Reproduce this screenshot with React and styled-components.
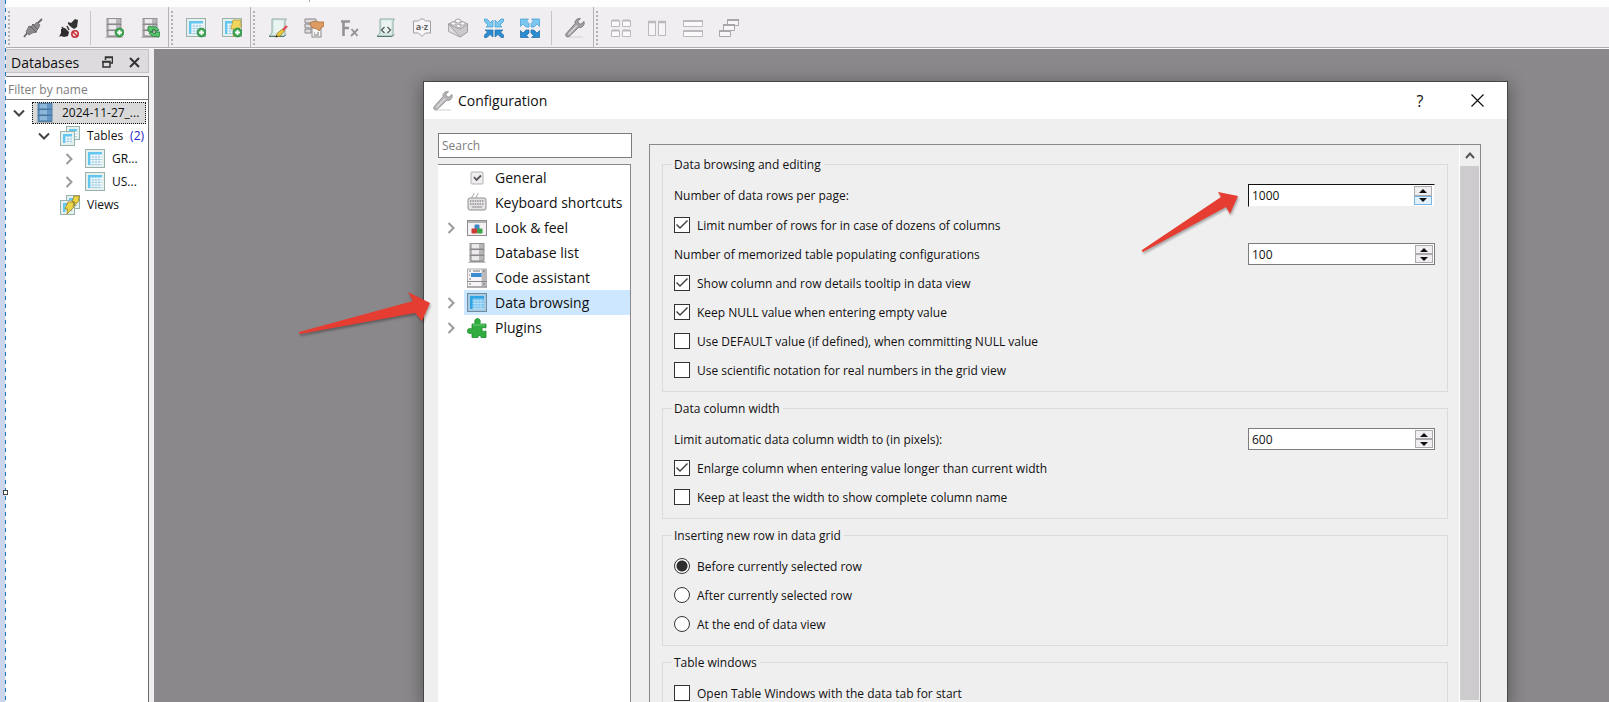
import React, { useState } from "react";
import styled, { createGlobalStyle, css } from "styled-components";

const GlobalStyle = createGlobalStyle`
  * {
    box-sizing: border-box;
  }
  body {
    margin: 0;
    background: #fdfdfd;
    color: #111;
    font-family: "Open Sans", "Noto Sans", sans-serif;
    font-size: 14px;
    overflow: hidden;
  }
  button, input {
    font: inherit;
    color: inherit;
    border-radius: 0;
  }
  button {
    padding: 0;
    border: 0;
    background: none;
    cursor: pointer;
  }
`;

const Page = styled.div`
  position: relative;
  display: flex;
  height: 100vh;
  overflow: hidden;
`;

const Edge = styled.div`
  position: relative;
  flex: none;
  width: 6px;
  background:
    repeating-linear-gradient(#1b78bc 0 4px, #e9f1fa 4px 8px) right / 1px 100% no-repeat,
    #cbd6ea;
`;

const EdgeHandle = styled.span`
  position: absolute;
  top: 490px;
  right: -2px;
  width: 5px;
  height: 5px;
  border: 1px solid #444;
  background: #fff;
`;

const Window = styled.div`
  flex: 1;
  min-width: 0;
  display: flex;
  flex-direction: column;
`;

const MenuStrip = styled.div`
  height: 7px;
  flex: none;
  background: linear-gradient(#aaa, #aaa) 303px 0 / 1px 2px no-repeat;
`;

const Toolbar = styled.div`
  display: flex;
  flex: none;
  height: 42px;
  background: #f0eef0;
  border-bottom: 1px solid #fafafa;
  box-shadow: inset 0 -1px #aeacae;
`;

const ToolGroup = styled.div`
  display: flex;
  align-items: center;
  border-right: ${(p) => (p.$last ? "0" : "1px solid #b4b2b4")};
`;

const Grip = styled.span`
  width: 9px;
  height: 34px;
  background: repeating-linear-gradient(#b4b2b4 0 2px, transparent 2px 4px) 2px 0 / 2px 100% no-repeat;
`;

const ToolButton = styled.button`
  display: grid;
  place-items: center;
  width: 36px;
  height: 36px;
`;

const Separator = styled.span`
  width: 9px;
  height: 34px;
  background: linear-gradient(#c6c4c6, #c6c4c6) 3px 0 / 1px 100% no-repeat;
`;

const Workspace = styled.div`
  flex: 1;
  min-height: 0;
  display: flex;
`;

const Sidebar = styled.aside`
  flex: none;
  width: 148px;
  display: flex;
  flex-direction: column;
  gap: 3px;
  padding-right: 5px;
  background: #f0eef0;
`;

const SidebarHeader = styled.div`
  display: flex;
  align-items: center;
  gap: 16px;
  height: 24px;
  padding: 2px 8px 0 5px;
  background: #dddbdd;
  border: 1px solid #c4c2c4;
  border-left: 0;
  h2 {
    flex: 1;
    margin: 0;
    font-size: 14px;
    font-weight: 400;
  }
  button {
    display: grid;
  }
`;

const SidebarBody = styled.div`
  flex: 1;
  background: #fff;
  border: 1px solid #6e6c6e;
  border-width: 1px 1px 0 0;
`;

const FilterInput = styled.input`
  display: block;
  width: 100%;
  height: 23px;
  padding: 2px 2px 0;
  border: 0;
  border-bottom: 1px solid #7d7b7d;
  outline: 0;
  font-size: 12px;
  &::placeholder {
    color: #7d7d7d;
  }
`;

const Tree = styled.div`
  padding-top: 1px;
  font-size: 12px;
`;

const TreeRow = styled.button`
  display: flex;
  align-items: center;
  width: 100%;
  height: 23px;
  padding: 0 2px 0 ${(p) => p.$depth * 25}px;
`;

const TreeToggle = styled.span`
  display: grid;
  place-items: center;
  flex: none;
  width: 26px;
`;

const TreeLabel = styled.span`
  flex: 1;
  min-width: 0;
  display: flex;
  align-items: center;
  gap: 7px;
  height: 22px;
  padding-left: 3px;
  white-space: nowrap;
  ${(p) =>
    p.$selected &&
    css`
      padding-left: 2px;
      background: #d9d9d9;
      border: 1px dotted #111;
    `}
`;

const Count = styled.span`
  color: #2323c8;
`;

const Mdi = styled.main`
  position: relative;
  flex: 1;
  background: #8a888a;
`;

const Dialog = styled.section`
  position: absolute;
  top: 32px;
  right: 101px;
  bottom: 0;
  left: 269px;
  display: flex;
  flex-direction: column;
  background: #f0eff0;
  border: 1px solid #474547;
  border-bottom: 0;
  box-shadow: 0 4px 16px 2px rgba(0, 0, 0, 0.32);
`;

const TitleBar = styled.header`
  display: flex;
  align-items: center;
  flex: none;
  height: 37px;
  padding: 0 10px 0 9px;
  background: #fff;
  h1 {
    flex: 1;
    margin: 0 0 0 5px;
    font-size: 14px;
    font-weight: 400;
  }
`;

const TitleButton = styled.button`
  display: grid;
  place-items: center;
  width: 40px;
  height: 30px;
  margin-left: 17px;
  font-size: 16px;
`;

const DialogBody = styled.div`
  flex: 1;
  min-height: 0;
  display: flex;
  gap: 17px;
  padding: 14px 26px 0 14px;
`;

const NavColumn = styled.div`
  flex: none;
  width: 194px;
  display: flex;
  flex-direction: column;
  gap: 6px;
`;

const SearchInput = styled.input`
  width: 100%;
  height: 25px;
  padding: 0 3px;
  border: 1px solid #7d7b7d;
  background: #fff;
  outline: 0;
  font-size: 12px;
  &::placeholder {
    color: #7d7d7d;
  }
`;

const Nav = styled.nav`
  flex: 1;
  margin-right: 1px;
  background: #fff;
  border: 1px solid #8a888a;
  border-width: 1px 1px 0 0;
`;

const NavItem = styled.button`
  display: flex;
  align-items: center;
  width: 100%;
  height: 25px;
`;

const NavToggle = styled.span`
  display: grid;
  place-items: center;
  width: 26px;
`;

const NavLabel = styled.span`
  flex: 1;
  display: flex;
  align-items: center;
  gap: 8px;
  height: 25px;
  padding-left: 3px;
  white-space: nowrap;
  background: ${(p) => (p.$active ? "#cce7ff" : "none")};
`;

const Pane = styled.div`
  flex: 1;
  min-width: 0;
  margin-top: 11px;
  display: flex;
  border: 1px solid #8a888a;
  border-bottom: 0;
`;

const PaneContent = styled.form`
  flex: 1;
  display: flex;
  flex-direction: column;
  gap: 6px;
  overflow: hidden;
  padding: 9px 11px 0 12px;
  font-size: 12px;
`;

const ScrollBar = styled.div`
  display: flex;
  flex-direction: column;
  flex: none;
  width: 21px;
  padding: 0 1px 2px 0;
  border-left: 1px solid #fff;
`;

const ScrollButton = styled.button`
  display: grid;
  place-items: center;
  height: 21px;
`;

const ScrollThumb = styled.div`
  flex: 1;
  background: #cdcbcd;
`;

const Group = styled.fieldset`
  flex: none;
  min-width: 0;
  margin: 0;
  padding: 10px 12px 10px 11px;
  border: 1px solid #dcdadc;
  legend {
    margin-left: -2px;
    padding: 2px 3px 0 2px;
    line-height: 18px;
  }
`;

const Rows = styled.div`
  display: flex;
  flex-direction: column;
  gap: 7px;
`;

const Row = styled.div`
  display: flex;
  align-items: center;
  height: ${(p) => (p.$focused ? 23 : 22)}px;
  > label:first-child {
    flex: 1;
  }
`;

const Option = styled.label`
  display: flex;
  align-items: center;
  gap: 7px;
`;

const CheckBox = styled.input.attrs({ type: "checkbox" })`
  appearance: none;
  display: grid;
  width: 16px;
  height: 16px;
  margin: 0;
  border: 1px solid #333;
  background: #fff;
  &:checked::after {
    content: "";
    background: #3c3c3c;
    clip-path: polygon(1px 7px, 2px 6px, 5px 9px, 12px 2px, 13px 3px, 5px 11px);
  }
`;

const Radio = styled.input.attrs({ type: "radio" })`
  appearance: none;
  width: 16px;
  height: 16px;
  margin: 0;
  border: 1px solid #333;
  border-radius: 50%;
  background: ${(p) => (p.checked ? "radial-gradient(#2e2e2e 5px, #fff 6px)" : "#fff")};
`;

const SpinFrame = styled.div`
  display: flex;
  width: 187px;
  height: 22px;
  background: #fff;
  border: 1px solid #7d7b7d;
  ${(p) =>
    p.$focused &&
    css`
      height: 23px;
      padding-right: 1px;
      border-color: #111 #f0eff0 #f0eff0 #111;
    `}
  input {
    flex: 1;
    min-width: 0;
    padding: 0 3px;
    border: 0;
    outline: 0;
    background: none;
  }
`;

const SpinButtons = styled.div`
  display: flex;
  flex-direction: column;
  width: 18px;
  margin: 1px;
`;

const SpinButton = styled.button`
  flex: 1;
  display: grid;
  place-items: center;
  background: ${(p) => (p.$hot ? "#e3f1fc" : "#f0eef0")};
  border: 1px solid ${(p) => (p.$hot ? "#7ab4e2" : "#acaaac")};
`;

const Callout = styled.svg`
  position: absolute;
  left: ${(p) => p.$x}px;
  top: ${(p) => p.$y}px;
  pointer-events: none;
  fill: #e53d31;
  filter: drop-shadow(1px 2px 1px rgba(0, 0, 0, 0.3));
`;

/* ---------- icons ---------- */

const Icon = ({ children, size = 20 }) => (
  <svg width={size} height={size} viewBox="0 0 20 20" aria-hidden="true">
    {children}
  </svg>
);

const PlusBadge = () => (
  <g>
    <circle cx="15.5" cy="14.5" r="4.5" fill="#3fa552" stroke="#23803a" strokeWidth=".6" />
    <path d="M15.5 12v5M13 14.5h5" stroke="#fff" strokeWidth="1.8" />
  </g>
);

const Cabinet = ({ fill = "#b9b7b9", light = "#eceaec", line = "#858385" }) => (
  <g>
    <path d="M1 19.5h18" stroke="#999" strokeOpacity=".6" />
    {[0.5, 6.5, 12.5].map((y) => (
      <g key={y}>
        <rect x="3" y={y} width="14" height="6" fill={fill} stroke={line} strokeWidth=".8" />
        <rect x="5" y={y + 0.6} width="7" height="4.8" fill={light} />
        <path d={`M4 ${y + 5.2}h12`} stroke={line} strokeOpacity=".6" />
      </g>
    ))}
  </g>
);

const Grid = ({
  x = 1,
  y = 1,
  w = 18,
  h = 17,
  fill = "#fff",
  head = "#62c6ef",
  line = "#a6cfe4",
  frame = "#9ab2ae",
  mat = "#e6f1ef",
}) => {
  const cols = [];
  const rows = [];
  for (let c = x + 7; c < x + w - 2; c += 3) cols.push(`M${c} ${y + 4.5}v${h - 6.5}`);
  for (let r = y + 7; r < y + h - 2; r += 2.5) rows.push(`M${x + 4.5} ${r}h${w - 6.5}`);
  return (
    <g>
      <rect x={x - 0.5} y={y - 0.5} width={w + 1} height={h + 1} fill={mat} stroke={frame} />
      <rect x={x + 2} y={y + 2} width={w - 4} height={h - 4} fill={fill} />
      <path d={cols.join("") + rows.join("")} stroke={line} strokeWidth=".9" />
      <path d={`M${x + 2} ${y + 3.2}h${w - 4}M${x + 3.2} ${y + 2}v${h - 4}`} stroke={head} strokeWidth="2.4" />
    </g>
  );
};

const Bolt = () => (
  <path d="M11 2h8l-1 5h2l-3 4-6 8 1-8H9z" fill="#f0d65c" stroke="#b59a35" strokeWidth=".8" />
);

const Scroll = () => (
  <g>
    <path d="M4 1h14.5L17 3v15H1l3-3z" fill="#d8e9e5" stroke="#88a59f" strokeWidth=".9" />
    <path d="M6 2.5h9v12H6z" fill="#eaf5f2" />
    <path d="M1 18.500h15l2-2" stroke="#54776f" fill="none" />
  </g>
);

const Wrench = ({ fill = "#a3a1a3", line = "#777577" }) => (
  <g>
    <path d="M4 19h14" stroke="#d2d0d2" />
    <path
      d="M19 3.500 16 6.200l-2.500-.7-.6-2.400L15.500.7c-3-.8-6.200 1.600-5.400 4.800L1 15.800c-1.200 1.800 1 4 3 2.800L13.500 9.500c3.300.6 6.500-2 5.500-6z"
      fill={fill}
      stroke={line}
      strokeWidth=".9"
    />
    <path d="m3.500 16.500 8.500-9" stroke="#dcdadc" strokeWidth="1.400" />
  </g>
);

const icons = {
  connect: (
    <g fill="#8c8a8c" stroke="#6a686a" strokeWidth=".8">
      <path d="m1 19 4-5" strokeWidth="1.800" />
      <path d="m19 1-4 4" strokeWidth="1.800" />
      <path d="m6 8 2 1 2-3 1 1 3-3 3 3-2 4-2 2 1 1-5 1-3 2-3-3 2-4z" />
      <path d="m7 8 6 6M9 6l6 6" stroke="#555" />
    </g>
  ),
  disconnect: (
    <g>
      <path d="m9 4 3 1 4-4 3 1-1 7-3 2-3-2-3-3z" fill="#333" />
      <path d="m2 11 4-1 4 4-1 4-4 1-3-1-2 1 2-4z" fill="#2d2d2d" />
      <path d="m3 9 2 3M8 8l2 4" stroke="#333" strokeWidth="1.500" />
      <circle cx="16" cy="16" r="3.200" fill="#f7dcdc" stroke="#c5303a" strokeWidth="1.600" />
      <path d="m14 14 4 4" stroke="#c5303a" strokeWidth="1.500" />
    </g>
  ),
  dbAdd: (
    <g>
      <Cabinet />
      <PlusBadge />
    </g>
  ),
  dbRefresh: (
    <g>
      <Cabinet />
      <path
        d="M8 13V9l2-1 2 1c2-1 5 0 7 3l-3 1-2-2-2 1 1 2zM20 14v4l-2 1-2-1c-2 1-5 0-7-3l3-1 2 2 2-1-1-1z"
        fill="#5cc66e"
        stroke="#23803a"
        strokeWidth=".9"
      />
    </g>
  ),
  tableAdd: (
    <g>
      <Grid />
      <PlusBadge />
    </g>
  ),
  viewAdd: (
    <g>
      <Grid />
      <Bolt />
      <PlusBadge />
    </g>
  ),
  sqlEditor: (
    <g>
      <Scroll />
      <path d="m8 19 1.500-4 5-4 2 2-4.500 5z" fill="#e9c83c" stroke="#917512" strokeWidth=".7" />
      <path d="m15 12 4-4" stroke="#dc4a52" strokeWidth="2.400" />
      <path d="m7.500 19.500 2.500-1-1.500-1.500z" fill="#222" />
    </g>
  ),
  ddl: (
    <g>
      <path d="M1 1h11v4H1zM1 6h7v4H1zM1 11h6v4H1z" fill="#dddbdd" stroke="#8a888a" />
      <rect x="8" y="9" width="9" height="10" fill="#f6f6f6" stroke="#8a888a" />
      <path d="M10 15h1M13 15h2M10 17h5" stroke="#777" />
      <path d="M6 5c3-2 6-2 9-1h5v4l-3 2-2 3-2-2-4-1-3-3z" fill="#dc9b62" stroke="#a96c38" strokeWidth=".8" />
    </g>
  ),
  fx: (
    <g stroke="#959395" fill="none">
      <path d="M3.500 18V3.500M1 3.500h9M3 10h6" strokeWidth="2.600" />
      <path d="m11.500 11 6 7M18 11l-7 7" strokeWidth="1.900" />
    </g>
  ),
  code: (
    <g>
      <Scroll />
      <path d="m8.500 9-3 3 3 3M11.500 9l3 3-3 3" fill="none" stroke="#555" strokeWidth="1.200" />
    </g>
  ),
  collation: (
    <g>
      <path d="M1.500 3h5l2-2h3l2 2h5v12h-5l-3.500 3.500L6.500 15h-5z" fill="#f7f5f7" stroke="#a19fa1" />
      <text x="10" y="12" textAnchor="middle" fontSize="9" fontWeight="700" fill="#666">
        a·z
      </text>
    </g>
  ),
  brick: (
    <g fill="#dcdadc" stroke="#9a989a" strokeWidth=".8">
      <path d="m.5 6 9.500-4 9.500 4v8L12 19 .5 13.500z" />
      <path d="M.5 6 12 11l7.500-5v8L12 19z" fill="#cbc9cb" />
      <path d="m.5 6 11.500 5 7.500-5L10 2z" fill="#e8e6e8" />
      <ellipse cx="10" cy="3" rx="3" ry="2" fill="#f6f4f6" />
      <ellipse cx="5.500" cy="5.500" rx="2.600" ry="1.700" fill="#f6f4f6" />
      <ellipse cx="14.500" cy="5.500" rx="2.600" ry="1.700" fill="#f6f4f6" />
      <ellipse cx="10.500" cy="8" rx="2.600" ry="1.600" fill="#f6f4f6" />
    </g>
  ),
  collapse: (
    <g strokeWidth=".7">
      <path
        d="M9 2v7H2l2-2-3.500-3.500V1H3l3.500 3.500zM11 2v7h7l-2-2 3.500-3.500V1H17l-3.500 3.500z"
        fill="#7cc7ef"
        stroke="#3e9bd2"
      />
      <path
        d="M9 19v-7H1l2.500 2L.5 17v2.500H3l3-3zM11 19v-7h8l-2.500 2 3 3v2.500H17l-3-3z"
        fill="#2c8cd0"
        stroke="#1d6ba8"
      />
    </g>
  ),
  expand: (
    <g strokeWidth=".7">
      <path
        d="M.5 1h8l-2 2L9 5.500V9H6L3 6 .5 8.500zM19.500 1h-8l2 2L11 5.500V9h3l3-3 2.500 2.500z"
        fill="#7cc7ef"
        stroke="#3e9bd2"
      />
      <path
        d="M.5 19.500h8l-2-2L9 15v-3H6l-3 3-2.500-2.500zM19.500 19.500h-8l2-2L11 15v-3h3l3 3 2.500-2.500z"
        fill="#2c8cd0"
        stroke="#1d6ba8"
      />
    </g>
  ),
  wrench: <Wrench />,
  wrenchLight: <Wrench fill="#b7b5b7" line="#929092" />,
  tile: (
    <g fill="#fafafa" stroke="#bbb9bb">
      <path d="M.5 2.500h8v6h-8zM11.500 2.500h8v6h-8zM.5 12.500h8v6h-8zM11.500 12.500h8v6h-8z" />
      <path d="M1 2.500h7M12 2.500h7M1 12.500h7M12 12.500h7" strokeWidth="2" />
    </g>
  ),
  columns: (
    <g fill="#f6f4f6" stroke="#bbb9bb">
      <path d="M1.500 3.500h7v14h-7zM11.500 3.500h7v14h-7z" />
      <path d="M1 4h8M11 4h8" strokeWidth="2.400" />
    </g>
  ),
  rows: (
    <g fill="#fafafa" stroke="#bbb9bb">
      <path d="M.5 2.500h19v6H.5zM.5 12.500h19v6H.5z" />
      <path d="M0 3h20M0 13h20" strokeWidth="2" />
    </g>
  ),
  cascade: (
    <g fill="#f8f6f8" stroke="#a9a7a9">
      <path d="M8.500 1.500h11v6h-11z" />
      <path d="M8 2h12" strokeWidth="2" />
      <path d="M4.500 6.500h11v6h-11z" />
      <path d="M4 7h12" strokeWidth="2" />
      <path d="M.5 12.500h11v6H.5z" />
      <path d="M0 13h12" strokeWidth="2" />
    </g>
  ),
  db: <Cabinet fill="#6296c4" light="#8db7da" line="#44739d" />,
  dbGray: <Cabinet />,
  tables: (
    <g>
      <Grid x={7} y={1} w={12} h={12} />
      <Grid x={1} y={6} w={13} h={13} />
    </g>
  ),
  table: <Grid />,
  tableSelected: <Grid fill="#6fc0ef" head="#2ea6e6" line="#b9e0f7" frame="#6d8ba3" mat="#a9cbe2" />,
  views: (
    <g>
      <Grid x={7} y={1} w={12} h={12} />
      <Grid x={1} y={6} w={13} h={13} />
      <path
        d="M14 1h5.500l-1 4h1l-5 6 .5-4h-3zM8 7h6l-1 5h1l-7 7 .5-5H5z"
        fill="#eed545"
        stroke="#93801e"
        strokeWidth=".8"
      />
    </g>
  ),
  general: (
    <g>
      <rect x="4" y="4" width="12" height="12" rx="1" fill="#efedef" stroke="#b4b2b4" />
      <path d="m7 9 2.500 3L14 7.500" fill="none" stroke="#555" strokeWidth="1.800" />
    </g>
  ),
  keyboard: (
    <g>
      <path d="M5 4.500c0-3 2-1 2-4M9 4.500c0-3 2-1 2-4" fill="none" stroke="#999" />
      <rect x="1" y="5" width="18" height="12" rx="2" fill="#e4e2e4" stroke="#8f8d8f" />
      <path d="M3 8h14M3 11h14" stroke="#8a888a" strokeWidth="1.400" strokeDasharray="1.400 1" />
      <path d="M5 14h10" stroke="#aaa" strokeWidth="1.500" />
    </g>
  ),
  look: (
    <g>
      <rect x=".5" y="2.500" width="19" height="15" fill="#f3f1f3" stroke="#908e90" />
      <path d="M1 4h18" stroke="#b5b3b5" strokeWidth="2" />
      <rect x="7.500" y="6.500" width="5" height="5" rx="1" fill="#3f86cb" />
      <rect x="4.500" y="10.500" width="5.500" height="5" rx="1" fill="#cf3a37" />
      <rect x="10" y="10.500" width="5.500" height="5" rx="1" fill="#3da548" />
    </g>
  ),
  assistant: (
    <g>
      <rect x=".5" y="1" width="19" height="18" fill="#f6f4f6" stroke="#b0aeb0" />
      <path d="M14.500 1h5v18h-5z" fill="#bbb9bb" />
      <path d="M4 7h10.500" stroke="#3a8dd0" strokeWidth="4" />
      <path d="M2 3h2M2 7h1M2 11h2M2 16h2M6 3h7M16 3h2M16 16h2" stroke="#777" strokeWidth="1.200" />
      <path d="M0 13.500h20M0 19h20" stroke="#8a888a" />
    </g>
  ),
  plugin: (
    <g>
      <path
        d="M5 6h3.500c-1.500-1.500-1-5.500 2-5.500S14 4.500 12.500 6H19v4c-3-1.200-4 0-4 1.500s1 2.500 4 1.500v6.500h-5c.8-2.500-3.800-2.500-3 0H5V15c-2 1-4.500.8-4.500-2S3 10 5 11z"
        fill="#31ad3f"
        stroke="#1b8a2c"
        strokeWidth=".8"
      />
      <path d="M6 7h12" stroke="#6fd07a" />
    </g>
  ),
};

const Chevron = ({ down, color = "#9a9a9a" }) => (
  <svg width="12" height="12" viewBox="0 0 12 12" aria-hidden="true">
    <path d={down ? "M1 3.500 6 8.500l5-5" : "m3.500 1 5 5-5 5"} fill="none" stroke={color} strokeWidth="2" />
  </svg>
);

const Arrow = ({ up }) => (
  <svg width="8" height="4" viewBox="0 0 8 4" aria-hidden="true">
    <path d={up ? "M0 4 4 0l4 4z" : "M0 0h8L4 4z"} fill="#111" />
  </svg>
);

/* ---------- data ---------- */

const toolGroups = [
  ["connect", "disconnect", null, "dbAdd", "dbRefresh"],
  ["tableAdd", "viewAdd"],
  ["sqlEditor", "ddl", "fx", "code", "collation", "brick", "collapse", "expand", null, "wrench"],
  ["tile", "columns", "rows", "cascade"],
];

const treeRows = [
  { label: "2024-11-27_...", icon: "db", depth: 0, open: true, selected: true },
  { label: "Tables", icon: "tables", depth: 1, open: true, count: 2 },
  { label: "GR...", icon: "table", depth: 2, closed: true },
  { label: "US...", icon: "table", depth: 2, closed: true },
  { label: "Views", icon: "views", depth: 1 },
];

const sections = [
  { label: "General", icon: "general" },
  { label: "Keyboard shortcuts", icon: "keyboard" },
  { label: "Look & feel", icon: "look", nested: true },
  { label: "Database list", icon: "dbGray" },
  { label: "Code assistant", icon: "assistant" },
  { label: "Data browsing", icon: "tableSelected", nested: true },
  { label: "Plugins", icon: "plugin", nested: true },
];

const positions = ["Before currently selected row", "After currently selected row", "At the end of data view"];

/* ---------- parts ---------- */

const CheckRow = ({ label, checked = false }) => {
  const [on, setOn] = useState(checked);
  return (
    <Row>
      <Option>
        <CheckBox checked={on} onChange={() => setOn(!on)} />
        {label}
      </Option>
    </Row>
  );
};

const SpinRow = ({ id, label, initial, focused }) => {
  const [value, setValue] = useState(initial);
  return (
    <Row $focused={focused}>
      <label htmlFor={id}>{label}</label>
      <SpinFrame $focused={focused}>
        <input id={id} inputMode="numeric" value={value} onChange={(e) => setValue(Number(e.target.value) || 0)} />
        <SpinButtons>
          <SpinButton type="button" aria-label="Increase" onClick={() => setValue(value + 1)}>
            <Arrow up />
          </SpinButton>
          <SpinButton type="button" aria-label="Decrease" $hot={focused} onClick={() => setValue(value - 1)}>
            <Arrow />
          </SpinButton>
        </SpinButtons>
      </SpinFrame>
    </Row>
  );
};

const Settings = () => {
  const [position, setPosition] = useState(positions[0]);

  return (
    <PaneContent>
      <Group>
        <legend>Data browsing and editing</legend>
        <Rows>
          <SpinRow id="rows-per-page" label="Number of data rows per page:" initial={1000} focused />
          <CheckRow label="Limit number of rows for in case of dozens of columns" checked />
          <SpinRow id="populating" label="Number of memorized table populating configurations" initial={100} />
          <CheckRow label="Show column and row details tooltip in data view" checked />
          <CheckRow label="Keep NULL value when entering empty value" checked />
          <CheckRow label="Use DEFAULT value (if defined), when committing NULL value" />
          <CheckRow label="Use scientific notation for real numbers in the grid view" />
        </Rows>
      </Group>
      <Group>
        <legend>Data column width</legend>
        <Rows>
          <SpinRow id="column-width" label="Limit automatic data column width to (in pixels):" initial={600} />
          <CheckRow label="Enlarge column when entering value longer than current width" checked />
          <CheckRow label="Keep at least the width to show complete column name" />
        </Rows>
      </Group>
      <Group>
        <legend>Inserting new row in data grid</legend>
        <Rows>
          {positions.map((item) => (
            <Row key={item}>
              <Option>
                <Radio name="position" checked={item === position} onChange={() => setPosition(item)} />
                {item}
              </Option>
            </Row>
          ))}
        </Rows>
      </Group>
      <Group>
        <legend>Table windows</legend>
        <Rows>
          <CheckRow label="Open Table Windows with the data tab for start" />
        </Rows>
      </Group>
    </PaneContent>
  );
};

const App = () => {
  const [section, setSection] = useState("Data browsing");

  return (
    <Page>
      <GlobalStyle />
      <Edge>
        <EdgeHandle />
      </Edge>
      <Window>
        <MenuStrip />
        <Toolbar>
          {toolGroups.map((group, i) => (
            <ToolGroup key={i} $last={i === toolGroups.length - 1}>
              <Grip />
              {group.map((name, j) =>
                name ? (
                  <ToolButton key={name} type="button" aria-label={name}>
                    <Icon>{icons[name]}</Icon>
                  </ToolButton>
                ) : (
                  <Separator key={j} />
                )
              )}
            </ToolGroup>
          ))}
        </Toolbar>
        <Workspace>
          <Sidebar>
            <SidebarHeader>
              <h2>Databases</h2>
              <button type="button" aria-label="Float">
                <svg width="11" height="12" viewBox="0 0 11 12">
                  <path d="M3.500 4V1h7v6H8M3 1.500h8M1 5.500h7v5.500H1zM0 6h8" fill="none" stroke="#333" strokeWidth="1.500" />
                </svg>
              </button>
              <button type="button" aria-label="Close">
                <svg width="11" height="11" viewBox="0 0 11 11">
                  <path d="m1 1 9 9M10 1l-9 9" stroke="#333" strokeWidth="2" />
                </svg>
              </button>
            </SidebarHeader>
            <SidebarBody>
              <FilterInput placeholder="Filter by name" aria-label="Filter by name" />
              <Tree>
                {treeRows.map((row) => (
                  <TreeRow key={row.label} type="button" $depth={row.depth}>
                    <TreeToggle>
                      {row.open && <Chevron down color="#444" />}
                      {row.closed && <Chevron />}
                    </TreeToggle>
                    <TreeLabel $selected={row.selected}>
                      <Icon>{icons[row.icon]}</Icon>
                      {row.label}
                      {row.count && <Count>({row.count})</Count>}
                    </TreeLabel>
                  </TreeRow>
                ))}
              </Tree>
            </SidebarBody>
          </Sidebar>
          <Mdi>
            <Dialog role="dialog" aria-label="Configuration">
              <TitleBar>
                <Icon>{icons.wrenchLight}</Icon>
                <h1>Configuration</h1>
                <TitleButton type="button">?</TitleButton>
                <TitleButton type="button" aria-label="Close">
                  <svg width="13" height="13" viewBox="0 0 13 13">
                    <path d="m.5.5 12 12M12.500.5l-12 12" stroke="#111" strokeWidth="1.200" />
                  </svg>
                </TitleButton>
              </TitleBar>
              <DialogBody>
                <NavColumn>
                  <SearchInput placeholder="Search" aria-label="Search" />
                  <Nav>
                    {sections.map((item) => (
                      <NavItem key={item.label} type="button" onClick={() => setSection(item.label)}>
                        <NavToggle>{item.nested && <Chevron />}</NavToggle>
                        <NavLabel $active={item.label === section}>
                          <Icon>{icons[item.icon]}</Icon>
                          {item.label}
                        </NavLabel>
                      </NavItem>
                    ))}
                  </Nav>
                </NavColumn>
                <Pane>
                  <Settings />
                  <ScrollBar>
                    <ScrollButton type="button" aria-label="Scroll up">
                      <svg width="10" height="7" viewBox="0 0 10 7">
                        <path d="m1 6 4-4.500L9 6" fill="none" stroke="#555" strokeWidth="2" />
                      </svg>
                    </ScrollButton>
                    <ScrollThumb />
                  </ScrollBar>
                </Pane>
              </DialogBody>
            </Dialog>
          </Mdi>
        </Workspace>
      </Window>
      <Callout $x={290} $y={285} width="150" height="60" viewBox="290 285 150 60">
        <path d="M299 332 413 301l-5-9 22 11-8 18-7-8-115 21q-2-1-1-2z" />
      </Callout>
      <Callout $x={1135} $y={185} width="110" height="75" viewBox="1135 185 110 75">
        <path d="m1142 250 79-53-3-5 20 4-8 18-4-7-83 45q-2-1-1-2z" />
      </Callout>
    </Page>
  );
};

export default App;
